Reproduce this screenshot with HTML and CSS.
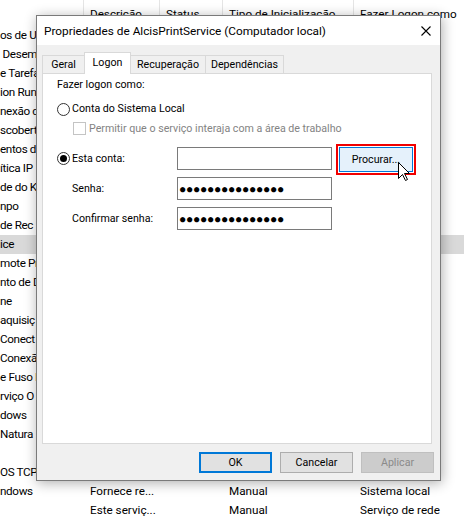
FILE: index.html
```html
<!DOCTYPE html>
<html lang="pt-BR">
<head>
<meta charset="utf-8">
<title>Propriedades de AlcisPrintService</title>
<link rel="stylesheet" href="styles.css">
</head>
<body>
<div class="services">
  <div class="row head">
    <div class="hcell"></div>
    <div class="hcell">Descrição</div>
    <div class="hcell">Status</div>
    <div class="hcell">Tipo de Inicialização</div>
    <div class="hcell">Fazer Logon como</div>
  </div>
  <div class="row"><span class="name">os de U</span></div>
  <div class="row"><span class="name">&nbsp;Desem</span></div>
  <div class="row"><span class="name">e Tarefa</span></div>
  <div class="row"><span class="name">ion Run</span></div>
  <div class="row"><span class="name">nexão d</span></div>
  <div class="row"><span class="name">scobert</span></div>
  <div class="row"><span class="name">entos d</span></div>
  <div class="row"><span class="name">ítica IP</span></div>
  <div class="row"><span class="name">de do K</span></div>
  <div class="row"><span class="name">npo</span></div>
  <div class="row"><span class="name">de Rec</span></div>
  <div class="row sel"><span class="name">ice</span></div>
  <div class="row"><span class="name">mote Pro</span></div>
  <div class="row"><span class="name">nto de D</span></div>
  <div class="row"><span class="name">ne</span></div>
  <div class="row"><span class="name">aquisiç</span></div>
  <div class="row"><span class="name">Conect</span></div>
  <div class="row"><span class="name">Conexã</span></div>
  <div class="row"><span class="name">e Fuso H</span></div>
  <div class="row"><span class="name">rviço O</span></div>
  <div class="row"><span class="name">dows</span></div>
  <div class="row"><span class="name">Natura</span></div>
  <div class="row"><span class="name"></span></div>
  <div class="row"><span class="name">OS TCP</span></div>
  <div class="row"><span class="name">ndows</span><span class="cell">Fornece re...</span><span class="cell"></span><span class="cell">Manual</span><span class="cell">Sistema local</span></div>
  <div class="row"><span class="name"></span><span class="cell">Este serviç...</span><span class="cell"></span><span class="cell">Manual</span><span class="cell">Serviço de rede</span></div>
</div>

<div class="dialog">
  <div class="titlebar">
    <span class="title">Propriedades de AlcisPrintService (Computador local)</span>
    <svg class="close" width="10" height="10" viewBox="0 0 10 10"><path d="M0.5 0.5 L9.5 9.5 M9.5 0.5 L0.5 9.5" stroke="#000" stroke-width="1.1" fill="none"/></svg>
  </div>
  <div class="dbody">
    <div class="tabs">
      <div class="tab t-geral">Geral</div>
      <div class="tab t-logon active">Logon</div>
      <div class="tab t-rec">Recuperação</div>
      <div class="tab t-dep">Dependências</div>
    </div>
    <div class="panel">
      <div class="heading">Fazer logon como:</div>
      <div class="opt first"><span class="radio"></span>Conta do Sistema Local</div>
      <div class="check"><span class="box"></span>Permitir que o serviço interaja com a área de trabalho</div>
      <div class="acct">
        <div class="opt"><span class="radio on"></span>Esta conta:</div>
        <div class="field"></div>
        <button class="btn browse">Procurar...<svg class="cursor" width="13" height="20" viewBox="0 0 13 20"><path d="M0.5 0.5 V16.5 L4.5 12.5 L7.5 18.5 L9.5 17.5 L6.5 11.5 H11.5 Z" fill="#fff" stroke="#000" stroke-width="1" stroke-linejoin="miter"/></svg></button>
        <div class="lbl">Senha:</div>
        <div class="field dots">●●●●●●●●●●●●●●●</div>
        <div></div>
        <div class="lbl">Confirmar senha:</div>
        <div class="field dots">●●●●●●●●●●●●●●●</div>
        <div></div>
      </div>
    </div>
    <div class="actions">
      <button class="btn default">OK</button>
      <button class="btn">Cancelar</button>
      <button class="btn disabled">Aplicar</button>
    </div>
  </div>
</div>
</body>
</html>
```

FILE: styles.css
```css
* { box-sizing: border-box; }

body {
  margin: 0;
  width: 464px;
  height: 518px;
  overflow: hidden;
  position: relative;
  background: #fff;
  color: #000;
  font-family: Roboto, "Segoe UI", "Noto Sans", sans-serif;
  font-size: 11.7px;
}

/* background services list */
.services {
  width: 464px;
}

.row {
  display: grid;
  grid-template-columns: 83px 76px 63px 131px 1fr;
  height: 19px;
  line-height: 19px;
  white-space: nowrap;
  overflow: hidden;
}

.row.head {
  height: 26px;
  line-height: 16px;
}

.hcell {
  padding: 6px 0 0 6px;
  border-left: 1px solid #e5e5e5;
  height: 26px;
  overflow: hidden;
}

.hcell:first-child {
  border-left: none;
}

.row.sel {
  background: #d9d9d9;
}

.name {
  padding-left: 0;
  letter-spacing: -0.35px;
  overflow: hidden;
}

.cell {
  padding-left: 7px;
  overflow: hidden;
}

/* dialog */
.dialog {
  position: absolute;
  left: 36px;
  top: 15px;
  width: 405px;
  height: 466px;
  border: 1px solid #7a7a7a;
  background: #f0f0f0;
  box-shadow: 1px 2px 12px rgba(0, 0, 0, 0.32);
}

.titlebar {
  height: 29px;
  background: #fff;
  display: flex;
  align-items: center;
  justify-content: space-between;
  padding: 0 9px 0 7px;
}

.title {
  font-size: 11.8px;
}

.close {
  display: block;
}

.dbody {
  padding: 7px 8px 7px 5px;
  font-size: 10.67px;
}

.tabs {
  display: flex;
  align-items: flex-end;
  margin-bottom: -1px;
  height: 22px;
}

.tab {
  height: 18px;
  margin-bottom: 1px;
  border: 1px solid #d9d9d9;
  border-bottom: none;
  background: #f0f0f0;
  display: flex;
  align-items: center;
  justify-content: center;
  margin-left: -1px;
}

.t-geral { width: 43px; margin-left: 0; }
.t-logon { width: 47px; }
.t-rec { width: 76px; }
.t-dep { width: 79px; }

.tab.active {
  height: 22px;
  margin-bottom: 0;
  background: #fff;
  position: relative;
  z-index: 1;
  padding-bottom: 3px;
}

.panel {
  height: 371px;
  background: #fff;
  border: 1px solid #d9d9d9;
  padding: 2px 0 0 14px;
}

.heading {
  line-height: 18px;
  height: 18px;
}

.opt {
  display: flex;
  align-items: center;
  line-height: 18px;
}

.opt.first {
  margin-top: 6px;
  height: 18px;
}

.radio {
  width: 13px;
  height: 13px;
  border: 1px solid #333;
  border-radius: 50%;
  background: #fff;
  margin-right: 2px;
  display: flex;
  align-items: center;
  justify-content: center;
  flex: none;
}

.radio.on::after {
  content: "";
  width: 7px;
  height: 7px;
  border-radius: 50%;
  background: #000;
}

.check {
  display: flex;
  align-items: center;
  height: 19px;
  margin-top: 1px;
  padding-left: 16px;
  color: #838383;
}

.box {
  width: 13px;
  height: 13px;
  border: 1px solid #c4c4c4;
  background: #fff;
  margin-right: 3px;
  flex: none;
}

.acct {
  margin-top: 9px;
  display: grid;
  grid-template-columns: 113px 155px 74px;
  grid-template-rows: 23px 23px 23px;
  column-gap: 7px;
  row-gap: 7px;
  align-items: center;
}

.lbl {
  padding-left: 15px;
}

.field {
  height: 23px;
  border: 1px solid #7a7a7a;
  background: #fff;
}

.dots {
  display: flex;
  align-items: center;
  font-family: "DejaVu Sans Mono", monospace;
  font-size: 8.8px;
  letter-spacing: 1.7px;
  padding-left: 2px;
  overflow: hidden;
  white-space: nowrap;
}

.btn {
  font-family: Roboto, "Segoe UI", "Noto Sans", sans-serif;
  font-size: 10.67px;
  color: #000;
  background: #e1e1e1;
  border: 1px solid #adadad;
  padding: 0;
  margin: 0;
  height: 21px;
  width: 73px;
}

.btn.browse {
  align-self: start;
  width: 74px;
  height: 25px;
  background: #e5f1fb;
  border: 1px solid #0078d7;
  outline: 2px solid #f00000;
  outline-offset: 1px;
  position: relative;
}

.cursor {
  position: absolute;
  left: 58px;
  top: 14px;
  display: block;
}

.actions {
  margin-top: 8px;
  margin-right: -2px;
  display: flex;
  justify-content: flex-end;
  gap: 8px;
}

.btn.default {
  border: 2px solid #0078d7;
}

.btn.disabled {
  background: #cccccc;
  border-color: #bfbfbf;
  color: #8a8a8a;
}
```
